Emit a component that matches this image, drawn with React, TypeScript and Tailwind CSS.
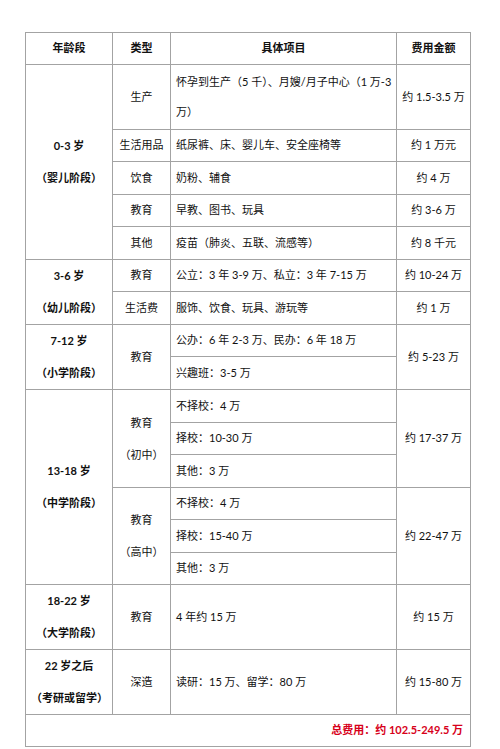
const cell = "border border-[#a3a3a3] px-[5px] align-middle";

type Row = { h: string; cells: React.ReactNode };

export default function App() {
  const c = `${cell} text-center`;
  const l = `${cell} text-left`;
  const age = `${cell} text-center font-bold leading-[32px]`;

  const rows: Row[] = [
    {
      h: "h-[32px]",
      cells: (
        <>
          <th className={`${c} font-bold`}>年龄段</th>
          <th className={`${c} font-bold`}>类型</th>
          <th className={`${c} font-bold`}>具体项目</th>
          <th className={`${c} font-bold`}>费用金额</th>
        </>
      ),
    },
    {
      h: "h-[65px]",
      cells: (
        <>
          <td rowSpan={5} className={age}>
            0-3 岁<br />（婴儿阶段）
          </td>
          <td className={c}>生产</td>
          <td className={`${l} leading-[30px] whitespace-nowrap`}>
            怀孕到生产（5 千）、月嫂/月子中心（1 万-3
            <br />
            万）
          </td>
          <td className={c}>约 1.5-3.5 万</td>
        </>
      ),
    },
    {
      h: "h-[32px]",
      cells: (
        <>
          <td className={c}>生活用品</td>
          <td className={l}>纸尿裤、床、婴儿车、安全座椅等</td>
          <td className={c}>约 1 万元</td>
        </>
      ),
    },
    {
      h: "h-[33px]",
      cells: (
        <>
          <td className={c}>饮食</td>
          <td className={l}>奶粉、辅食</td>
          <td className={c}>约 4 万</td>
        </>
      ),
    },
    {
      h: "h-[32px]",
      cells: (
        <>
          <td className={c}>教育</td>
          <td className={l}>早教、图书、玩具</td>
          <td className={c}>约 3-6 万</td>
        </>
      ),
    },
    {
      h: "h-[33px]",
      cells: (
        <>
          <td className={c}>其他</td>
          <td className={l}>疫苗（肺炎、五联、流感等）</td>
          <td className={c}>约 8 千元</td>
        </>
      ),
    },
    {
      h: "h-[32px]",
      cells: (
        <>
          <td rowSpan={2} className={age}>
            3-6 岁<br />（幼儿阶段）
          </td>
          <td className={c}>教育</td>
          <td className={l}>公立：3 年 3-9 万、私立：3 年 7-15 万</td>
          <td className={c}>约 10-24 万</td>
        </>
      ),
    },
    {
      h: "h-[33px]",
      cells: (
        <>
          <td className={c}>生活费</td>
          <td className={l}>服饰、饮食、玩具、游玩等</td>
          <td className={c}>约 1 万</td>
        </>
      ),
    },
    {
      h: "h-[32px]",
      cells: (
        <>
          <td rowSpan={2} className={age}>
            7-12 岁<br />（小学阶段）
          </td>
          <td rowSpan={2} className={c}>
            教育
          </td>
          <td className={l}>公办：6 年 2-3 万、民办：6 年 18 万</td>
          <td rowSpan={2} className={c}>
            约 5-23 万
          </td>
        </>
      ),
    },
    {
      h: "h-[33px]",
      cells: (
        <>
          <td className={l}>兴趣班：3-5 万</td>
        </>
      ),
    },
    {
      h: "h-[33px]",
      cells: (
        <>
          <td rowSpan={6} className={age}>
            13-18 岁<br />（中学阶段）
          </td>
          <td rowSpan={3} className={`${c} leading-[32px]`}>
            教育
            <br />
            （初中）
          </td>
          <td className={l}>不择校：4 万</td>
          <td rowSpan={3} className={c}>
            约 17-37 万
          </td>
        </>
      ),
    },
    {
      h: "h-[32px]",
      cells: <td className={l}>择校：10-30 万</td>,
    },
    {
      h: "h-[33px]",
      cells: <td className={l}>其他：3 万</td>,
    },
    {
      h: "h-[32px]",
      cells: (
        <>
          <td rowSpan={3} className={`${c} leading-[32px]`}>
            教育
            <br />
            （高中）
          </td>
          <td className={l}>不择校：4 万</td>
          <td rowSpan={3} className={c}>
            约 22-47 万
          </td>
        </>
      ),
    },
    {
      h: "h-[33px]",
      cells: <td className={l}>择校：15-40 万</td>,
    },
    {
      h: "h-[32px]",
      cells: <td className={l}>其他：3 万</td>,
    },
    {
      h: "h-[65px]",
      cells: (
        <>
          <td className={age}>
            18-22 岁<br />（大学阶段）
          </td>
          <td className={c}>教育</td>
          <td className={l}>4 年约 15 万</td>
          <td className={c}>约 15 万</td>
        </>
      ),
    },
    {
      h: "h-[65px]",
      cells: (
        <>
          <td className={age}>
            22 岁之后<br />（考研或留学）
          </td>
          <td className={c}>深造</td>
          <td className={l}>读研：15 万、留学：80 万</td>
          <td className={c}>约 15-80 万</td>
        </>
      ),
    },
    {
      h: "h-[32px]",
      cells: (
        <td colSpan={4} className={`${cell} text-right pr-[7px] font-bold text-[#d7001a]`}>
          总费用：约 102.5-249.5 万
        </td>
      ),
    },
  ];

  return (
    <div
      className="w-[500px] h-[749px] bg-white pt-[32px] pl-[25px] text-[11px] text-[#111111]"
      style={{ fontFamily: '"Lato", "Noto Sans CJK SC", sans-serif' }}
    >
      <table className="border-collapse table-fixed w-[445px]">
        <colgroup>
          <col className="w-[87px]" />
          <col className="w-[58px]" />
          <col className="w-[226px]" />
          <col className="w-[74px]" />
        </colgroup>
        <tbody>
          {rows.map((r, i) => (
            <tr key={i} className={r.h}>
              {r.cells}
            </tr>
          ))}
        </tbody>
      </table>
    </div>
  );
}
